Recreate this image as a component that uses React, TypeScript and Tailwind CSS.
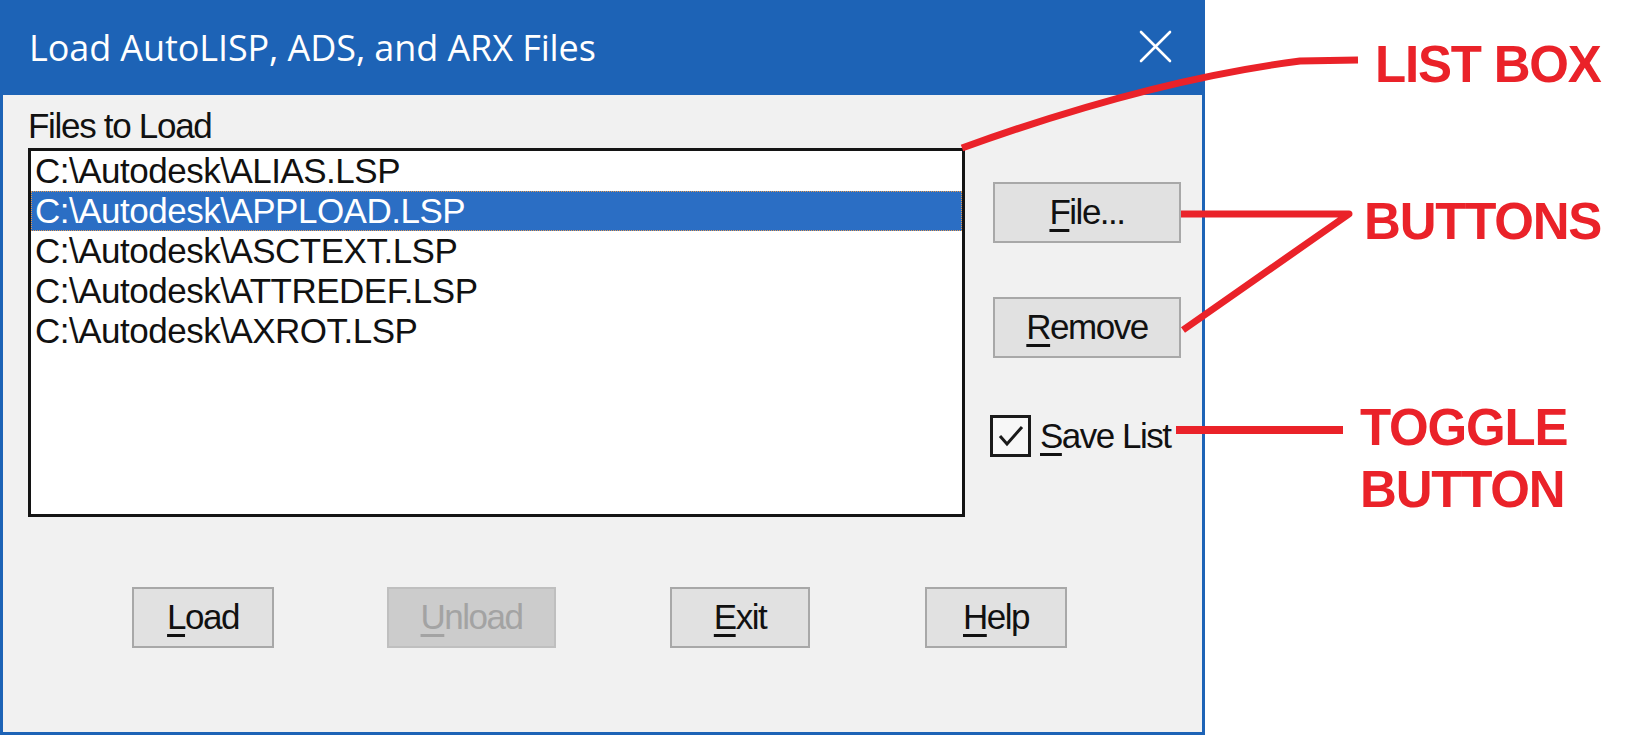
import React from 'react';

const files = [
  'C:\\Autodesk\\ALIAS.LSP',
  'C:\\Autodesk\\APPLOAD.LSP',
  'C:\\Autodesk\\ASCTEXT.LSP',
  'C:\\Autodesk\\ATTREDEF.LSP',
  'C:\\Autodesk\\AXROT.LSP',
];

// one mnemonic letter underlined, rest plain
function Label({ first, rest }: { first: string; rest: string }) {
  return (
    <span>
      <span className="underline decoration-[3px] underline-offset-[5px]">{first}</span>
      {rest}
    </span>
  );
}

function DlgButton({
  first,
  rest,
  width,
  disabled = false,
  className = '',
}: {
  first: string;
  rest: string;
  width: string;
  disabled?: boolean;
  className?: string;
}) {
  return (
    <div
      className={`${width} h-[61px] flex items-center justify-center border-2 text-[35px] tracking-[-1.5px] ${
        disabled
          ? 'bg-[#cccccc] border-[#bfbfbf] text-[#a3a3a3]'
          : 'bg-[#e1e1e1] border-[#a8a8a8] text-[#111]'
      } ${className}`}
    >
      <Label first={first} rest={rest} />
    </div>
  );
}

export default function App() {
  const selected = 1;

  return (
    <div className="relative w-[1625px] h-[741px] bg-white flex overflow-hidden font-['Liberation_Sans',Arial,sans-serif]">
      {/* Dialog */}
      <div className="w-[1205px] h-[735px] flex flex-col shrink-0">
        {/* Title bar */}
        <div className="h-[95px] bg-[#1d63b6] flex items-center justify-between pl-[29px] pr-[33px]">
          <span className="text-white text-[36px] font-['Open_Sans','Noto_Sans',sans-serif] tracking-[-0.1px]">
            Load AutoLISP, ADS, and ARX Files
          </span>
          <svg width="33" height="33" viewBox="0 0 33 33" className="mt-[-2px]">
            <path d="M2 2 L31 31 M31 2 L2 31" stroke="white" strokeWidth="2.6" strokeLinecap="round" />
          </svg>
        </div>

        {/* Body */}
        <div className="flex-1 bg-[#f1f1f1] border-l-[3px] border-r-[3px] border-b-[3px] border-[#1d63b6] flex flex-col pl-[25px] pt-[13px]">
          <div className="flex">
            <div className="flex flex-col w-[937px]">
              <span className="text-[35px] leading-none tracking-[-1.3px] text-[#111]">
                Files to Load
              </span>
              <div className="mt-[5px] h-[369px] bg-white border-[3px] border-[#141414] flex flex-col">
                {files.map((f, i) => (
                  <div
                    key={f}
                    className={`h-[40px] pl-[3px] text-[35px] leading-[38px] tracking-[-0.5px] whitespace-nowrap ${
                      i === selected
                        ? 'bg-[#2b6ec4] text-white border border-dotted border-[#e39a52]'
                        : 'text-[#111] border border-transparent'
                    }`}
                  >
                    {f}
                  </div>
                ))}
              </div>
            </div>

            {/* Right-hand buttons */}
            <div className="flex flex-col ml-[28px] pt-[74px]">
              <DlgButton first="F" rest="ile..." width="w-[188px]" />
              <DlgButton first="R" rest="emove" width="w-[188px]" className="mt-[54px]" />
              <div className="flex items-center mt-[52px] ml-[-3px]">
                <div className="w-[41px] h-[42px] border-[3px] border-[#1a1a1a] bg-[#f7f7f7] flex items-center justify-center">
                  <svg width="30" height="30" viewBox="0 0 30 30">
                    <path d="M4 15 L11 23 L26 6" fill="none" stroke="#1a1a1a" strokeWidth="3" />
                  </svg>
                </div>
                <span className="ml-[9px] text-[35px] tracking-[-1.5px] text-[#111]">
                  <Label first="S" rest="ave List" />
                </span>
              </div>
            </div>
          </div>

          {/* Bottom row of buttons */}
          <div className="flex mt-[70px]">
            <DlgButton first="L" rest="oad" width="w-[142px]" className="ml-[104px]" />
            <DlgButton first="U" rest="nload" width="w-[169px]" className="ml-[113px]" disabled />
            <DlgButton first="E" rest="xit" width="w-[140px]" className="ml-[114px]" />
            <DlgButton first="H" rest="elp" width="w-[142px]" className="ml-[115px]" />
          </div>
        </div>
      </div>

      {/* Annotation labels */}
      <div className="flex flex-col pl-[155px] font-['Liberation_Sans',Arial,sans-serif] font-bold text-[#ea2229] text-[51px] tracking-[-1.2px]">
        <span className="leading-none mt-[39px] ml-[15px] whitespace-nowrap">LIST BOX</span>
        <span className="leading-none mt-[106px] ml-[4px] whitespace-nowrap">BUTTONS</span>
        <div className="flex flex-col leading-[62px] mt-[150px]">
          <span>TOGGLE</span>
          <span>BUTTON</span>
        </div>
      </div>

      {/* Leader lines drawn over the dialog */}
      <svg
        className="absolute inset-0 pointer-events-none"
        width="1625"
        height="741"
        viewBox="0 0 1625 741"
      >
        <g fill="none" stroke="#ea2229" strokeLinejoin="round">
          <path d="M1358 60 L1300 61 Q1150 80 962 148" strokeWidth="7" />
          <path d="M1181 214 L1349 214 L1183 330" strokeWidth="7" />
          <path d="M1176 430 L1343 430" strokeWidth="8" />
        </g>
      </svg>
    </div>
  );
}
